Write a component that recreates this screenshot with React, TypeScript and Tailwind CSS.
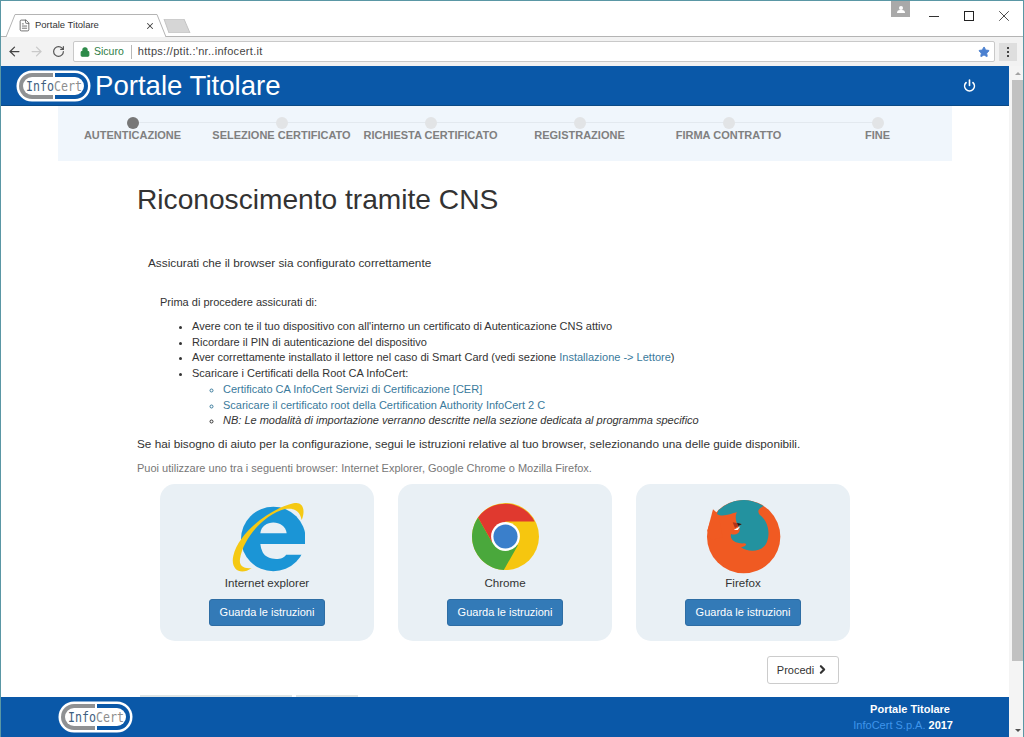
import { ArrowLeft, ArrowRight, ChevronRight, FileText, Lock, Power, RotateCw, Star, X } from "lucide-react";

const STEPS = ["AUTENTICAZIONE", "SELEZIONE CERTIFICATO", "RICHIESTA CERTIFICATO", "REGISTRAZIONE", "FIRMA CONTRATTO", "FINE"];

const InfoCertLogo = () => (
  <svg width="75" height="32" viewBox="0 0 75 32" className="shrink-0">
    <rect x="0.5" y="0.5" width="74" height="31" rx="15.5" fill="#fff" />
    <path d="M37 3H16A13 13 0 0 0 16 29H37Z" fill="#8f9193" />
    <path d="M39 3H59A13 13 0 0 1 59 29H39Z" fill="#0a58a8" />
    <rect x="7" y="7" width="61" height="18" rx="9" fill="#fff" />
    <text transform="translate(38 21) scale(0.8 1)" textAnchor="middle" fontFamily="'DejaVu Sans Mono', monospace" fontSize="14.5" fill="#8e8e8e">
      <tspan fill="#3f5f80">Info</tspan>Cert
    </text>
  </svg>
);

const IeIcon = () => (
  <svg width="75" height="75" viewBox="235 55 225 225">
    <circle cx="365" cy="175" r="97" fill="#1b95d6" />
    <path d="M326 158C330 115 400 115 405 158Z" fill="#e9f0f5" />
    <path d="M326 190H470V222H403C395 240 345 240 333 215Q327 203 326 190Z" fill="#e9f0f5" />
    <path d="M425 68C455 60 462 90 450 118C445 92 430 80 400 85C340 100 275 170 265 235C262 255 275 265 300 262C270 285 235 270 245 225C260 160 350 85 425 68Z" fill="#f5c913" />
  </svg>
);

const ChromeIcon = () => (
  <svg width="67" height="67" viewBox="245 70 200 200">
    <circle cx="345" cy="170" r="100" fill="#f6c60f" />
    <path d="M263 113A100 100 0 0 0 340 270L382 196L305 187Z" fill="#4aa83c" />
    <path d="M263 113A100 100 0 0 1 432 125H345L305 187Z" fill="#e0392f" />
    <circle cx="345" cy="170" r="43" fill="#fff" />
    <circle cx="345" cy="170" r="36" fill="#3a7fcb" />
  </svg>
);

const FirefoxIcon = () => (
  <svg width="75" height="75" viewBox="225 55 225 225">
    <circle cx="338" cy="168" r="110" fill="#f05a22" />
    <path d="M229 150L246 86L262 100L275 170L240 178Z" fill="#f05a22" />
    <path d="M262 89A110 110 0 0 1 398 76C382 84 378 92 386 102C412 122 420 160 405 190C390 215 350 215 330 200C345 196 350 190 340 188C315 190 295 178 300 160C315 166 330 155 325 142C312 122 312 105 318 95C300 98 275 112 258 100Z" fill="#23929f" />
    <path d="M305 125L332 130L312 142Z" fill="#b0341a" />
    <path d="M318 126L332 131L322 135Z" fill="#1c1c1c" />
    <path d="M308 148L328 137L320 148Z" fill="#fff" />
  </svg>
);

const BrowserCard = ({ label, icon }: { label: string; icon: React.ReactNode }) => (
  <div className="w-[214px] h-[157px] bg-[#e9f0f5] rounded-[15px] flex flex-col items-center pt-[17px]">
    <div className="h-[71px] flex items-center justify-center">{icon}</div>
    <div className="mt-[3px] text-[11.6px] leading-[16px] text-[#333]">{label}</div>
    <button className="mt-[8px] w-[116px] h-[27px] bg-[#337ab7] border border-[#2e6da4] rounded-[3px] text-white text-[11px]">
      Guarda le istruzioni
    </button>
  </div>
);

const BrowserChrome = () => (
  <>
    {/* Tab strip */}
    <div className="h-[36px] bg-white flex items-end pl-[5px] relative shrink-0 border-b border-[#b4b4b4]">
      <div className="relative w-[160px] h-[23px] -mb-px flex items-center pl-[12px]">
        <svg width="160" height="23" viewBox="0 0 160 23" className="absolute inset-0">
          <path d="M0 23L9 .5H151L160 23" fill="#fff" stroke="#b4b4b4" />
        </svg>
        <FileText size={13} strokeWidth={1.5} className="relative text-[#555]" />
        <span className="relative ml-[4px] text-[9.5px] text-[#333]">Portale Titolare</span>
        <X size={10} strokeWidth={2.5} className="relative ml-[46px] text-[#444]" />
      </div>
      <svg width="28" height="14" viewBox="0 0 28 14" className="mb-[3px] -ml-[3px]">
        <path d="M1 0H21L27 14H6Z" fill="#d6d6d6" stroke="#c4c4c4" />
      </svg>
      <div className="absolute left-[890px] top-0 w-[19px] h-[16px] bg-[#a9a9a9] flex flex-col items-center justify-center">
        <div className="w-[4px] h-[4px] rounded-full bg-white" />
        <div className="w-[8px] h-[3px] rounded-t-[3px] bg-white" />
      </div>
      <div className="absolute left-[928px] top-[6px] flex items-center">
        <div className="w-[10px] h-px bg-[#333]" />
        <div className="ml-[25px] w-[10px] h-[10px] border border-[#222]" />
        <X size={18} strokeWidth={1} className="ml-[21px] text-[#111]" />
      </div>
    </div>
    {/* Toolbar */}
    <div className="h-[29px] bg-[#f2f2f2] flex items-center shrink-0">
      <ArrowLeft size={15} strokeWidth={2} className="ml-[6px] text-[#444]" />
      <ArrowRight size={15} strokeWidth={2} className="ml-[7px] text-[#c9c9c9]" />
      <RotateCw size={13} strokeWidth={2.2} className="ml-[8px] text-[#555]" />
      <div className="ml-[8px] w-[922px] h-[21px] bg-white border border-[#c9c9c9] rounded-[2px] flex items-center pl-[6px] pr-[4px] text-[10.5px]">
        <Lock size={10} strokeWidth={3} className="text-[#2e8b4a] fill-[#2e8b4a]" />
        <span className="ml-[4px] text-[#2e7d46]">Sicuro</span>
        <span className="ml-[7px] w-px h-[14px] bg-[#b8b8b8]" />
        <span className="ml-[6px] text-[#444] text-[11px] tracking-[0.3px]">https://ptit.:'nr..infocert.it</span>
        <Star size={12} className="ml-auto text-[#4a80d0] fill-[#4a80d0]" />
      </div>
      <div className="ml-[4px] w-[18px] h-[18px] bg-[#dedede] flex flex-col items-center justify-center gap-[2px]">
        <div className="w-[2px] h-[2px] bg-[#444]" />
        <div className="w-[2px] h-[2px] bg-[#444]" />
        <div className="w-[2px] h-[2px] bg-[#444]" />
      </div>
    </div>
  </>
);

const Scrollbar = () => (
  <div className="w-[14px] shrink-0 bg-[#f4f4f4] flex flex-col items-end">
    <div className="w-[11px] h-[14px] flex items-center justify-center">
      <div className="border-x-[3px] border-b-[3px] border-x-transparent border-b-[#a3a3a3]" />
    </div>
    <div className="w-[11px] h-[581px] bg-[#c1c1c1]" />
    <div className="w-[11px] mt-auto h-[14px] flex items-center justify-center">
      <div className="border-x-[3px] border-t-[3px] border-x-transparent border-t-[#505050]" />
    </div>
  </div>
);

export default function App() {
  return (
    <div className="w-[1024px] h-[737px] overflow-hidden flex flex-col bg-white border-x border-t border-[#5a97a5] font-['Liberation_Sans',Arial,sans-serif]">
      <BrowserChrome />
      <div className="flex-1 flex min-h-0">
        <div className="flex-1 flex flex-col min-w-0">
          {/* Header */}
          <header className="h-[40px] shrink-0 bg-[#0a58a8] border-b border-[#0b4a86] flex items-center pl-[15px] pr-[33px]">
            <InfoCertLogo />
            <span className="ml-[4px] text-[27.6px] leading-[32px] text-white">Portale Titolare</span>
            <Power size={13} strokeWidth={3} className="ml-auto text-white" />
          </header>

          <main className="flex-1 flex flex-col min-h-0">
            {/* Stepper */}
            <div className="ml-[57px] w-[894px] h-[55px] shrink-0 bg-[#f0f6fc] grid grid-cols-6 relative">
              <div className="absolute left-[75px] right-[75px] top-[16px] h-px bg-[#e3e9ef]" />
              {STEPS.map((step, i) => (
                <div key={step} className="relative flex flex-col items-center pt-[11px]">
                  <div className={i === 0 ? "w-[12px] h-[12px] rounded-full bg-[#777]" : "w-[12px] h-[12px] rounded-full bg-[#e2e4e6]"} />
                  <span className="text-[11px] leading-[13px] font-bold text-[#808080] whitespace-nowrap">{step}</span>
                </div>
              ))}
            </div>

            <div className="pl-[136px] text-[11px] text-[#333]">
              <h1 className="mt-[22px] text-[28.15px] leading-[34px] text-[#333]">Riconoscimento tramite CNS</h1>
              <p className="mt-[38px] ml-[11px] text-[11.8px] leading-[16px]">Assicurati che il browser sia configurato correttamente</p>
              <p className="mt-[23px] ml-[23px] leading-[16px]">Prima di procedere assicurati di:</p>
              <ul className="mt-[9px] ml-[55px] list-disc leading-[15.7px]">
                <li>Avere con te il tuo dispositivo con all'interno un certificato di Autenticazione CNS attivo</li>
                <li>Ricordare il PIN di autenticazione del dispositivo</li>
                <li>
                  Aver correttamente installato il lettore nel caso di Smart Card (vedi sezione{" "}
                  <a className="text-[#3a7a9c]">Installazione -&gt; Lettore</a>)
                </li>
                <li>
                  Scaricare i Certificati della Root CA InfoCert:
                  <ul className="ml-[31px] list-[circle]">
                    <li className="text-[#3a7a9c]">Certificato CA InfoCert Servizi di Certificazione [CER]</li>
                    <li className="text-[#3a7a9c]">Scaricare il certificato root della Certification Authority InfoCert 2 C</li>
                    <li className="italic">NB: Le modalità di importazione verranno descritte nella sezione dedicata al programma specifico</li>
                  </ul>
                </li>
              </ul>
              <p className="mt-[7px] text-[11.77px] leading-[16px]">
                Se hai bisogno di aiuto per la configurazione, segui le istruzioni relative al tuo browser, selezionando una delle guide disponibili.
              </p>
              <p className="mt-[8px] leading-[16px] text-[#777]">
                Puoi utilizzare uno tra i seguenti browser: Internet Explorer, Google Chrome o Mozilla Firefox.
              </p>
            </div>

            {/* Browser cards */}
            <div className="mt-[8px] ml-[159px] flex gap-[24px]">
              <BrowserCard label="Internet explorer" icon={<IeIcon />} />
              <BrowserCard label="Chrome" icon={<ChromeIcon />} />
              <BrowserCard label="Firefox" icon={<FirefoxIcon />} />
            </div>

            <div className="mt-[15px] ml-[766px]">
              <button className="w-[72px] h-[28px] bg-white border border-[#ccc] rounded-[3px] flex items-center justify-center text-[11px] text-[#333]">
                Procedi
                <ChevronRight size={13} strokeWidth={4} className="ml-[2px]" />
              </button>
            </div>

            <div className="mt-auto ml-[139px] flex gap-[4px]">
              <div className="w-[152px] h-[2px] bg-[#dfe5e5]" />
              <div className="w-[62px] h-[2px] bg-[#dfe5e5]" />
            </div>
          </main>

          {/* Footer */}
          <footer className="h-[40px] shrink-0 bg-[#0a58a8] flex items-center pl-[57px] pr-[56px]">
            <InfoCertLogo />
            <div className="ml-auto flex flex-col items-end text-[11px] leading-[16px]">
              <span className="mr-[3px] font-bold text-white">Portale Titolare</span>
              <span className="text-[#3f95ea]">
                InfoCert S.p.A. <b className="text-white">2017</b>
              </span>
            </div>
          </footer>
        </div>
        <Scrollbar />
      </div>
    </div>
  );
}
